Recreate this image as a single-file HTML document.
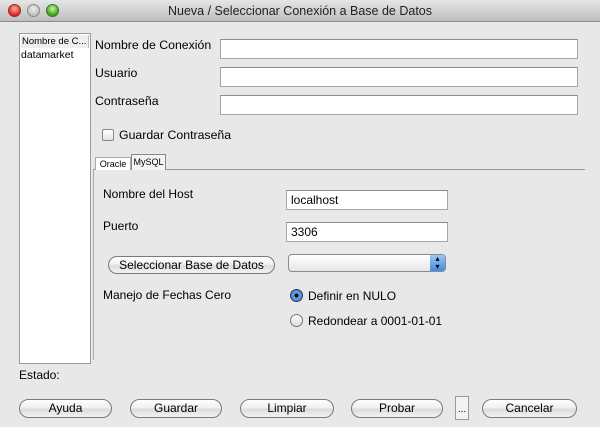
<!DOCTYPE html><html><head><style>
*{margin:0;padding:0;box-sizing:border-box}
body{width:600px;height:427px;background:#e8e8e8;font-family:"Liberation Sans","DejaVu Sans",sans-serif;font-size:12px;color:#000;position:relative;overflow:hidden}
.a{position:absolute;white-space:nowrap}
.tb{left:0;top:0;width:600px;height:22px;background:linear-gradient(#e6e6e6,#bdbdbd);border-bottom:1px solid #8a8a8a;text-align:center;line-height:22px;font-size:12.5px;color:#222}
.dot{width:13px;height:13px;border-radius:50%;top:4px}
.tf{background:#fff;border:1px solid #a5a5a5;border-top-color:#8c8c8c;padding-left:4px;line-height:18px;font-size:12px}
.btn{height:19px;border:1px solid #7a7a7a;border-radius:10px;background:linear-gradient(#fff,#f0f0f0 45%,#dcdcdc 55%,#f4f4f4);text-align:center;line-height:17px;font-size:12px}
.rad{width:13px;height:13px;border-radius:50%;border:1px solid #777;background:linear-gradient(#fff,#ddd)}
.lb{font-size:12.3px}
</style></head><body>
<div class="a tb">Nueva / Seleccionar Conexión a Base de Datos</div>
<div class="a dot" style="left:8px;background:radial-gradient(circle at 50% 35%,#ffb0a8,#d9261a 70%);border:1px solid #9a2a20"></div>
<div class="a dot" style="left:27px;background:radial-gradient(circle at 50% 35%,#eee,#aaa);border:1px solid #888"></div>
<div class="a dot" style="left:46px;background:radial-gradient(circle at 50% 35%,#c8f5a8,#3a9f18 70%);border:1px solid #3a7a20"></div>
<div class="a" style="left:19px;top:33px;width:72px;height:331px;background:#fff;border:1px solid #9a9a9a"></div>
<div class="a" style="left:21px;top:35px;width:68px;height:13px;background:#eee;font-size:9.5px;line-height:13px;padding-left:1px;border-right:1px solid #bbb;overflow:hidden">Nombre de C...</div>
<div class="a" style="left:21px;top:49px;font-size:10.5px">datamarket</div>
<div class="a lb" style="left:95px;top:38px">Nombre de Conexión</div>
<div class="a lb" style="left:95px;top:66px">Usuario</div>
<div class="a lb" style="left:95px;top:94px">Contraseña</div>
<div class="a tf" style="left:220px;top:39px;width:358px;height:20px"></div>
<div class="a tf" style="left:220px;top:67px;width:358px;height:20px"></div>
<div class="a tf" style="left:220px;top:95px;width:358px;height:20px"></div>
<div class="a" style="left:102px;top:129px;width:12px;height:12px;border:1px solid #888;border-radius:2px;background:linear-gradient(#fff,#e4e4e4)"></div>
<div class="a lb" style="left:119px;top:128px">Guardar Contraseña</div>
<div class="a" style="left:93px;top:169px;width:492px;height:1px;background:#9a9a9a"></div>
<div class="a" style="left:95px;top:157px;width:36px;height:13px;border:1px solid #aaa;border-bottom:none;background:#fff;font-size:9px;line-height:12px;text-align:center">Oracle</div>
<div class="a" style="left:131px;top:154px;width:35px;height:16px;border:1px solid #888;border-bottom:none;background:#f4f4f4;font-size:9px;line-height:14px;text-align:center">MySQL</div>
<div class="a" style="left:93px;top:170px;width:1px;height:190px;background:#aaa"></div>
<div class="a" style="left:103px;top:187px">Nombre del Host</div>
<div class="a" style="left:103px;top:219px">Puerto</div>
<div class="a tf" style="left:286px;top:190px;width:162px;height:20px">localhost</div>
<div class="a tf" style="left:286px;top:222px;width:162px;height:20px">3306</div>
<div class="a btn" style="left:108px;top:256px;width:167px;height:18px">Seleccionar Base de Datos</div>
<div class="a" style="left:288px;top:254px;width:158px;height:18px;border:1px solid #8a8a8a;border-radius:4px;background:linear-gradient(#fff,#e6e6e6)"></div>
<div class="a" style="left:430px;top:255px;width:15px;height:16px;border-radius:0 3px 3px 0;background:linear-gradient(#9cc8f4,#3f8ae0);color:#000;font-size:8px;line-height:8px;text-align:center">▴<br>▾</div>
<div class="a" style="left:103px;top:288px">Manejo de Fechas Cero</div>
<div class="a rad" style="left:290px;top:289px;background:radial-gradient(circle,#000 22%,#6aa6ea 30%,#2e6fd0);border-color:#335"></div>
<div class="a" style="left:308px;top:289px">Definir en NULO</div>
<div class="a rad" style="left:290px;top:314px"></div>
<div class="a" style="left:308px;top:314px">Redondear a 0001-01-01</div>
<div class="a" style="left:19px;top:368px">Estado:</div>
<div class="a btn" style="left:19px;top:399px;width:93px">Ayuda</div>
<div class="a btn" style="left:130px;top:399px;width:92px">Guardar</div>
<div class="a btn" style="left:240px;top:399px;width:94px">Limpiar</div>
<div class="a btn" style="left:351px;top:399px;width:92px">Probar</div>
<div class="a" style="left:455px;top:396px;width:14px;height:24px;border:1px solid #999;background:#f3f3f3;font-size:10px;text-align:center;line-height:26px">...</div>
<div class="a btn" style="left:482px;top:399px;width:95px">Cancelar</div>
</body></html>
